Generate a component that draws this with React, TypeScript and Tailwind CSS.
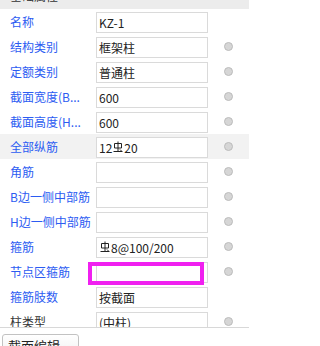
import React from 'react';

type Row = {
  label: string;
  value?: React.ReactNode;
  dot?: boolean;
  active?: boolean;
  plain?: boolean;
};

// 三级钢筋符号
const Rebar: React.FC = () => (
  <svg width="10" height="12" viewBox="0 0 10 12" className="inline-block mx-[1px] -mt-[2px]" fill="none" stroke="#222" strokeWidth="1">
    <path d="M5 0.5V10.5" />
    <path d="M1.5 2.5H8.5V7H1.5Z" />
    <path d="M0.5 10.5H9.5" />
    <path d="M7 8.5L8.5 10" />
  </svg>
);

const rows: Row[] = [
  { label: '名称', value: 'KZ-1' },
  { label: '结构类别', value: '框架柱', dot: true },
  { label: '定额类别', value: '普通柱', dot: true },
  { label: '截面宽度(B...', value: '600', dot: true },
  { label: '截面高度(H...', value: '600', dot: true },
  {
    label: '全部纵筋',
    value: (
      <>
        12
        <Rebar />
        20
      </>
    ),
    dot: true,
    active: true,
  },
  { label: '角筋', dot: true },
  { label: 'B边一侧中部筋', dot: true },
  { label: 'H边一侧中部筋', dot: true },
  {
    label: '箍筋',
    value: (
      <>
        <Rebar />
        8@100/200
      </>
    ),
    dot: true,
  },
  { label: '节点区箍筋', dot: true },
  { label: '箍筋肢数', value: '按截面' },
  { label: '柱类型', value: '(中柱)', dot: true, plain: true },
];

const PropRow: React.FC<{ row: Row }> = ({ row }) => (
  <div className={`flex h-[25px] ${row.active ? 'bg-[#f2f2f2]' : 'bg-white'}`}>
    <div
      className={`w-[96px] shrink-0 pl-[10px] flex items-center whitespace-nowrap text-[12px] leading-none ${
        row.plain ? 'text-[#333333]' : 'text-[#2c5cf2]'
      }`}
    >
      {row.label}
    </div>
    <div className="mt-[3px] h-[21px] w-[112px] shrink-0 border border-[#dadada] bg-white pl-[2px] flex items-center text-[12px] leading-none text-[#222222] whitespace-nowrap overflow-hidden">
      {row.value}
    </div>
    <div className="flex-1 flex items-center pl-[16px]">
      {row.dot && <span className="block w-[9px] h-[9px] rounded-full bg-[#d6d6d6] border border-[#bcbcbc]" />}
    </div>
  </div>
);

const App: React.FC = () => {
  return (
    <div
      className="relative w-[249px] h-[346px] overflow-hidden bg-white"
      style={{ fontFamily: '"Noto Sans CJK SC", "Noto Sans", sans-serif' }}
    >
      {/* 属性列表 */}
      <div className="h-[328px] overflow-hidden border-b border-[#d8d8d8]">
        <div className="-mt-[17px] h-[26px] bg-[#ececec] flex items-center pl-[10px] text-[12px] leading-none text-[#333333]">
          基础属性
        </div>
        {rows.map((row) => (
          <PropRow key={row.label} row={row} />
        ))}
      </div>

      {/* 选中框 */}
      <div className="absolute left-[88px] top-[262px] w-[116px] h-[23px] border-[4px] border-[#f020f0]" />

      <div className="pl-[2px] pt-[4px]">
        <button className="w-[77px] h-[24px] rounded-[3px] border border-[#c2c2c2] bg-gradient-to-b from-white to-[#efefef] pl-[5px] text-left text-[13px] leading-none text-[#222222]">
          截面编辑
        </button>
      </div>
    </div>
  );
};

export default App;
